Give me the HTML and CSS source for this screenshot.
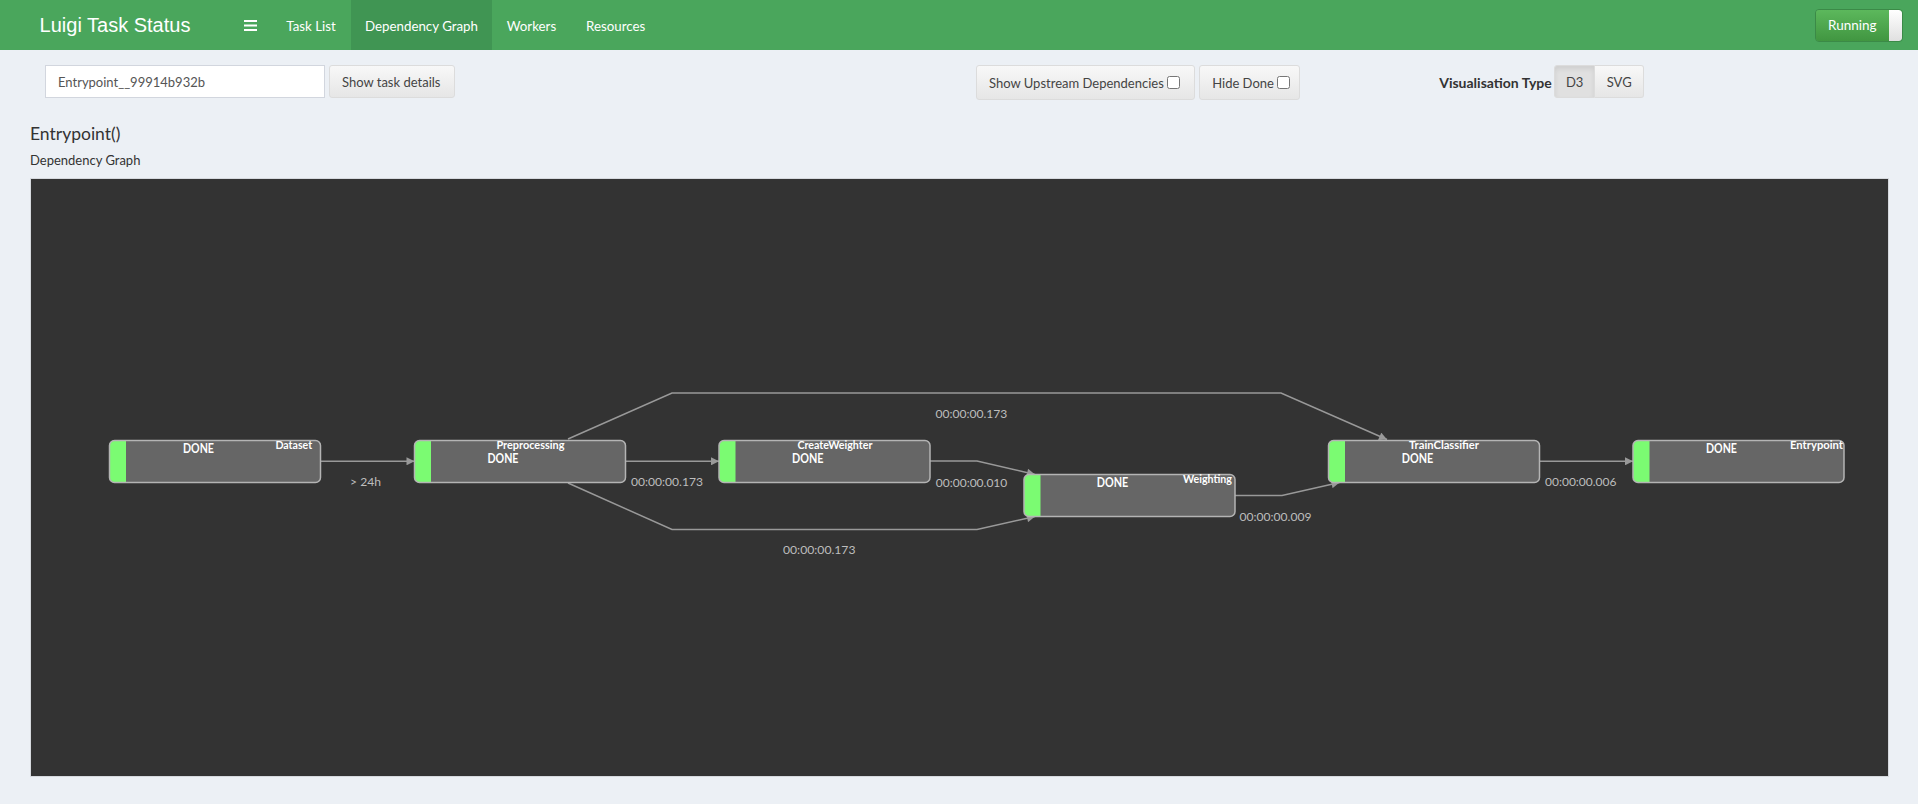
FILE: index.html
```html
<!DOCTYPE html>
<html>
<head>
<meta charset="utf-8">
<title>Luigi Task Status</title>
<link rel="stylesheet" href="styles.css">
</head>
<body>
<nav class="navbar">
  <a class="brand" href="#">Luigi Task Status</a>
  <a class="menu-toggle" href="#">
    <svg width="13" height="11" viewBox="0 0 13 11"><rect x="0" y="0" width="13" height="2" fill="#fff"/><rect x="0" y="4.5" width="13" height="2" fill="#fff"/><rect x="0" y="9" width="13" height="2" fill="#fff"/></svg>
  </a>
  <ul class="nav">
    <li><a href="#">Task List</a></li>
    <li class="active"><a href="#">Dependency Graph</a></li>
    <li><a href="#">Workers</a></li>
    <li><a href="#">Resources</a></li>
  </ul>
  <div class="run-toggle">
    <span class="run-label">Running</span>
    <span class="run-handle"></span>
  </div>
</nav>

<main class="content">
  <div class="toolbar">
    <input class="task-input" type="text" value="Entrypoint__99914b932b">
    <button class="btn btn-details">Show task details</button>
    <div class="graph-opts">
      <label class="btn btn-check btn-upstream">Show Upstream Dependencies<input type="checkbox"></label>
      <label class="btn btn-check btn-hide">Hide Done<input type="checkbox"></label>
    </div>
    <div class="vis">
      <span class="vis-label">Visualisation Type</span>
      <div class="btn-group">
        <button class="btn btn-d3 active">D3</button>
        <button class="btn btn-svg">SVG</button>
      </div>
    </div>
  </div>

  <h4 class="task-title">Entrypoint()</h4>
  <div class="subtitle">Dependency Graph</div>

  <div class="graph-box">
    <svg class="graph" width="1857" height="597" viewBox="31 179 1857 597">
      <defs>
        <marker id="arrow" viewBox="0 0 10 10" refX="10" refY="5" markerUnits="userSpaceOnUse" markerWidth="9" markerHeight="8" orient="auto">
          <path d="M0 0 L10 5 L0 10 z" fill="#999"/>
        </marker>
        <g id="nodebox">
          <rect x="0" y="0" width="211" height="42" rx="5" fill="#666"/>
          <path d="M16.5 0 H5 A5 5 0 0 0 0 5 V37 A5 5 0 0 0 5 42 H16.5 Z" fill="#7bfb72"/>
          <rect x="0" y="0" width="211" height="42" rx="5" fill="none" stroke="#b4b4b4" stroke-width="1.5"/>
        </g>
      </defs>

      <g class="edges">
        <path d="M321 461.3 L414.5 461.3"/>
        <path d="M625.5 461.3 L719 461.3"/>
        <path d="M568 439 L672 393 L1281 393 L1387 439.5"/>
        <path d="M568 483 L672 529.5 L977 529.5 L1035 516.5"/>
        <path d="M930 461 L977 461 L1035 474.5"/>
        <path d="M1234.5 495.5 L1282 495.5 L1339.5 482.5"/>
        <path d="M1539.5 461.3 L1633 461.3"/>
      </g>

      <g class="edge-labels">
        <text x="350" y="486" textLength="31" lengthAdjust="spacingAndGlyphs">&gt; 24h</text>
        <text x="631" y="486" textLength="72" lengthAdjust="spacingAndGlyphs">00:00:00.173</text>
        <text x="935.4" y="417.7" textLength="72" lengthAdjust="spacingAndGlyphs">00:00:00.173</text>
        <text x="783" y="554.3" textLength="72.5" lengthAdjust="spacingAndGlyphs">00:00:00.173</text>
        <text x="935.8" y="486.7" textLength="71.5" lengthAdjust="spacingAndGlyphs">00:00:00.010</text>
        <text x="1239.5" y="521" textLength="72" lengthAdjust="spacingAndGlyphs">00:00:00.009</text>
        <text x="1545" y="486" textLength="71.5" lengthAdjust="spacingAndGlyphs">00:00:00.006</text>
      </g>

      <g class="nodes">
        <use href="#nodebox" x="109.5" y="440.5"/>
        <use href="#nodebox" x="414.5" y="440.5"/>
        <use href="#nodebox" x="719" y="440.5"/>
        <use href="#nodebox" x="1024" y="474.5"/>
        <use href="#nodebox" x="1328.5" y="440.5"/>
        <use href="#nodebox" x="1633" y="440.5"/>
      </g>

      <g class="node-text">
        <text class="st" x="183" y="453.3" textLength="31" lengthAdjust="spacingAndGlyphs">DONE</text>
        <text class="nm" x="275.4" y="448.7" textLength="36.7" lengthAdjust="spacingAndGlyphs">Dataset</text>

        <text class="nm" x="496.4" y="448.7" textLength="68" lengthAdjust="spacingAndGlyphs">Preprocessing</text>
        <text class="st" x="487.5" y="462.7" textLength="31" lengthAdjust="spacingAndGlyphs">DONE</text>

        <text class="nm" x="797.4" y="448.7" textLength="75" lengthAdjust="spacingAndGlyphs">CreateWeighter</text>
        <text class="st" x="792" y="462.7" textLength="31.5" lengthAdjust="spacingAndGlyphs">DONE</text>

        <text class="st" x="1096.7" y="486.7" textLength="31.5" lengthAdjust="spacingAndGlyphs">DONE</text>
        <text class="nm" x="1183" y="483.3" textLength="49" lengthAdjust="spacingAndGlyphs">Weighting</text>

        <text class="nm" x="1409" y="448.7" textLength="70" lengthAdjust="spacingAndGlyphs">TrainClassifier</text>
        <text class="st" x="1401.7" y="462.7" textLength="31.5" lengthAdjust="spacingAndGlyphs">DONE</text>

        <text class="st" x="1706" y="452.8" textLength="31" lengthAdjust="spacingAndGlyphs">DONE</text>
        <text class="nm" x="1790" y="448.7" textLength="53" lengthAdjust="spacingAndGlyphs">Entrypoint</text>
      </g>
    </svg>
  </div>
</main>
</body>
</html>
```
FILE: styles.css
```css
* {
  box-sizing: border-box;
}

body {
  margin: 0;
  background: #ecf0f5;
  font-family: Lato, "Liberation Sans", sans-serif;
  font-size: 13px;
  color: #333;
}

/* ---------- top bar ---------- */
.navbar {
  display: flex;
  height: 50px;
  background: #4aa65c;
}

.brand {
  width: 230px;
  text-align: center;
  font-family: "Liberation Sans", Arial, sans-serif;
  font-size: 20px;
  line-height: 50px;
  color: #fff;
  text-decoration: none;
}

.menu-toggle {
  width: 41px;
  display: flex;
  align-items: center;
  justify-content: center;
}

.nav {
  display: flex;
  list-style: none;
  margin: 0;
  padding: 0;
}

.nav a {
  display: block;
  height: 50px;
  padding: 1px 0 0;
  line-height: 50px;
  color: #fff;
  text-decoration: none;
  font-size: 13.3px;
  text-align: center;
  white-space: nowrap;
}

.nav .active a {
  background: #409553;
}

.nav li:nth-child(1) a {
  width: 80px;
}

.nav li:nth-child(2) a {
  width: 141px;
}

.nav li:nth-child(3) a {
  width: 79px;
}

.nav li:nth-child(4) a {
  padding: 1px 15px 0;
  text-align: left;
}

.run-toggle {
  display: flex;
  height: 33px;
  margin: 9px 15px 0 auto;
  border: 1px solid #3b8a47;
  border-radius: 4px;
  overflow: hidden;
}

.run-label {
  width: 73px;
  padding-left: 12px;
  line-height: 31px;
  color: #fff;
  font-size: 13.5px;
  background: linear-gradient(#5cb85c, #419641);
}

.run-handle {
  width: 13px;
  background: linear-gradient(#ffffff, #e0e0e0);
  border-radius: 0 3px 3px 0;
}

/* ---------- toolbar ---------- */
.toolbar {
  display: flex;
  align-items: flex-start;
  padding: 15px 0 0 45px;
}

.task-input {
  width: 280px;
  height: 33px;
  margin: 0;
  padding: 0 12px;
  border: 1px solid #d2d6de;
  border-radius: 0;
  background: #fff;
  font-family: Lato, sans-serif;
  font-size: 13px;
  color: #555;
  outline: none;
}

.btn {
  display: flex;
  align-items: center;
  height: 33px;
  margin: 0;
  padding: 0 12px;
  border: 1px solid #dcdcdc;
  border-radius: 3px;
  background: linear-gradient(#f8f8f8, #e6e6e6);
  font-family: Lato, sans-serif;
  font-size: 13px;
  color: #444;
  white-space: nowrap;
}

.btn-details {
  width: 126px;
  margin-left: 4px;
}

.graph-opts {
  display: flex;
  gap: 4.7px;
  margin-left: 521px;
}

.btn-check {
  height: 35px;
}

.btn-check input {
  margin: 0 0 0 3px;
  width: 13px;
  height: 13px;
}

.btn-upstream {
  width: 218.5px;
}

.btn-hide {
  width: 101px;
}

.vis {
  display: flex;
  align-items: flex-start;
  margin-left: 139px;
}

.vis-label {
  width: 115px;
  font-weight: 700;
  font-size: 14px;
  line-height: 20px;
  padding-top: 8px;
  color: #333;
  white-space: nowrap;
}

.btn-group {
  display: flex;
}

.btn-group .btn-d3 {
  width: 41px;
  border-radius: 3px 0 0 3px;
  background: #e0e0e0;
  box-shadow: inset 0 3px 5px rgba(0, 0, 0, 0.08);
  justify-content: center;
}

.btn-group .btn-svg {
  width: 49px;
  border-left: 0;
  border-radius: 0 3px 3px 0;
  justify-content: center;
}

/* ---------- titles ---------- */
.task-title {
  margin: 24px 0 0 30px;
  font-size: 17.5px;
  line-height: 20px;
  font-weight: 400;
  color: #333;
}

.subtitle {
  margin: 7px 0 0 30px;
  line-height: 18px;
  font-size: 13px;
  color: #333;
}

/* ---------- graph ---------- */
.graph-box {
  margin: 9px 29px 0 30px;
  height: 599px;
  border: 1px solid #d6d9de;
  background: #333;
}

.graph {
  display: block;
}

.edges path {
  fill: none;
  stroke: #999;
  stroke-width: 1.5;
  marker-end: url(#arrow);
}

.edge-labels text {
  font-family: Lato, sans-serif;
  font-size: 12px;
  fill: #bdbdbd;
}

.node-text text {
  font-family: Lato, sans-serif;
  font-weight: 700;
  fill: #fff;
}

.node-text .st {
  font-size: 12.5px;
}

.node-text .nm {
  font-size: 10.7px;
}
```
